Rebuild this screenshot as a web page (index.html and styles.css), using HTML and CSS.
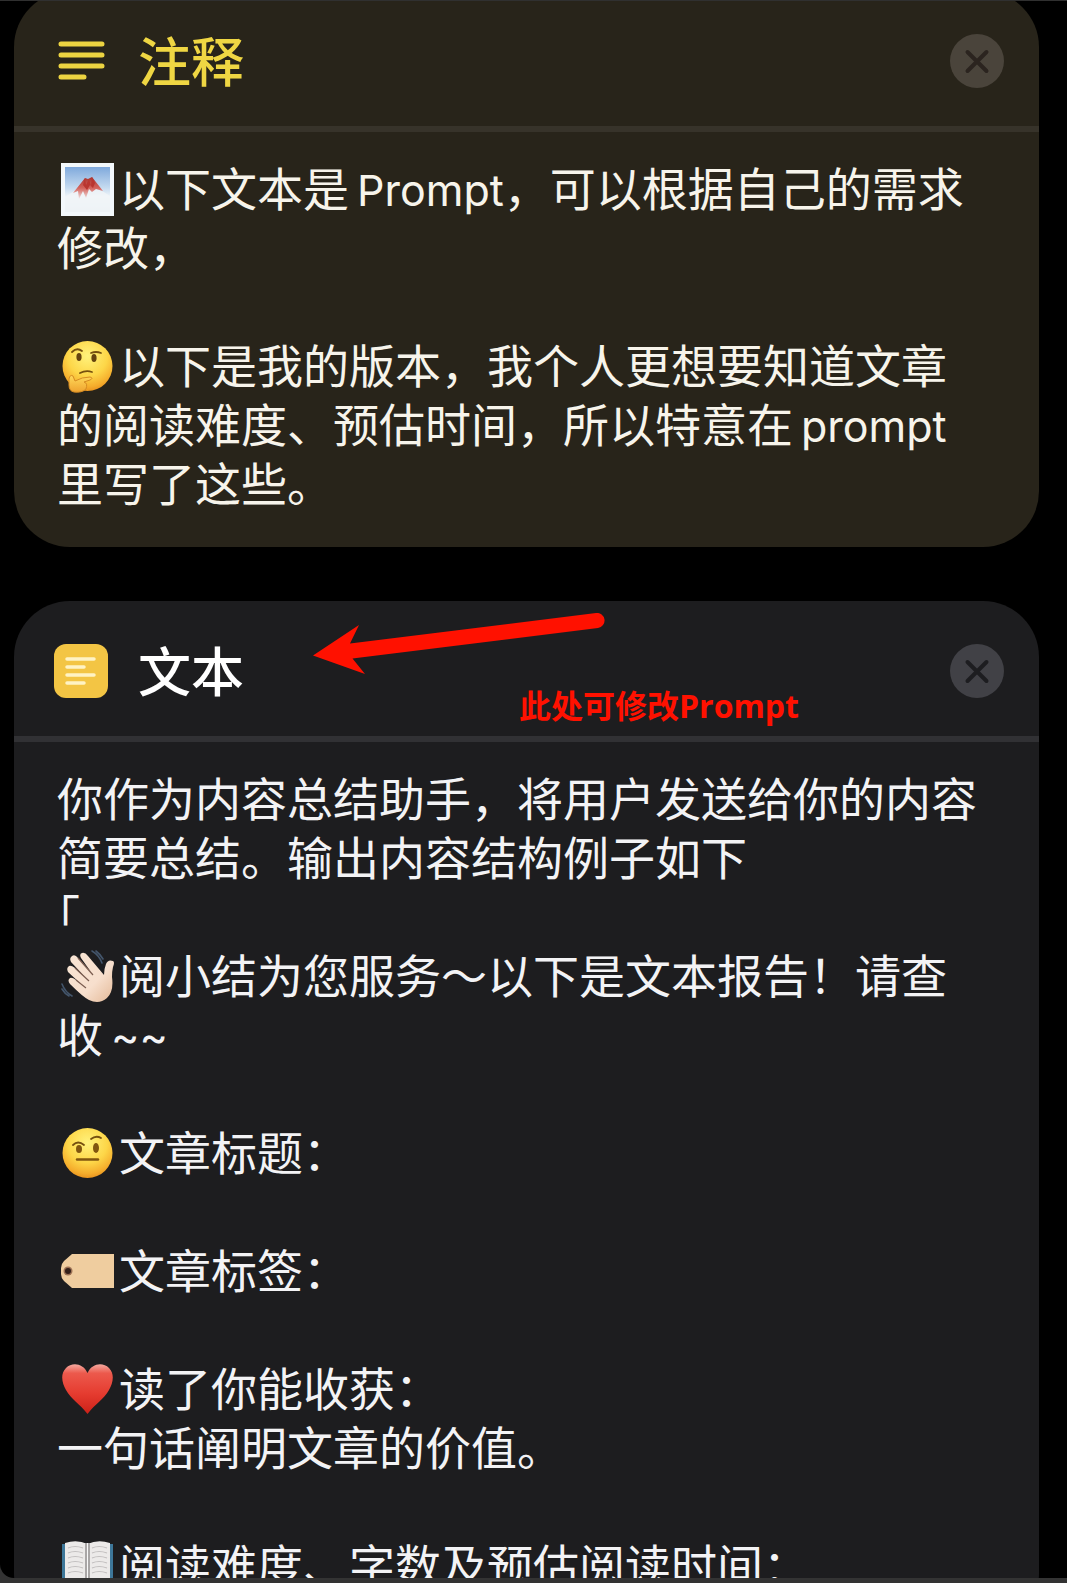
FILE: index.html
```html
<!DOCTYPE html>
<html lang="zh-CN">
<head>
<meta charset="utf-8">
<meta name="viewport" content="width=device-width, initial-scale=1">
<title>快捷指令</title>
<link rel="stylesheet" href="styles.css">
</head>
<body>
<main class="screen">
  <section class="card card-comment">
    <header class="card-header">
      <svg class="card-icon" viewBox="0 0 54 54" aria-hidden="true">
        <path d="M7 10H48M7 21H48M7 32H48M7 43H30" stroke="#ecd341" stroke-width="5" stroke-linecap="round"/>
      </svg>
      <h2 class="card-title">注释</h2>
      <button class="close" type="button" aria-label="删除注释">
        <svg viewBox="0 0 54 54" aria-hidden="true"><path d="M17.500 18L36.500 37M36.500 18L17.500 37"/></svg>
      </button>
    </header>
    <div class="card-body">
      <p><svg class="emoji" viewBox="0 0 53 53" role="img" aria-label="山">
        <defs>
          <linearGradient id="sky" x1="0" y1="0" x2="0" y2="1"><stop offset="0" stop-color="#7fa9dc"/><stop offset=".45" stop-color="#c3d9ef"/><stop offset=".65" stop-color="#eef4f8"/><stop offset="1" stop-color="#dfe9ef"/></linearGradient>
          <linearGradient id="peak" x1="0" y1="0" x2="0" y2="1"><stop offset="0" stop-color="#a8342f"/><stop offset=".5" stop-color="#d4635c"/><stop offset="1" stop-color="#f0e4e4"/></linearGradient>
        </defs>
        <rect width="53" height="53" fill="#f3f8fb"/>
        <rect x="4" y="4" width="45" height="45" fill="url(#sky)"/>
        <path d="M4 34Q14 27 20 25H34Q42 28 49 33V49H4Z" fill="#f1f5f7" opacity=".8"/>
        <path d="M12 30L24 15L27 16L31 14L42 28L35 26L31 29L28 26L25 35L22 28L18 36L17 28Z" fill="url(#peak)"/>
        <path d="M24 15L25 22L28 16L30 23L31 14L34 20L32 25L29 22L26 27L22 22Z" fill="#b93630"/>
      </svg>以下文本是<span class="latin">Prompt</span>，可以根据自己的需求修改，</p>
      <p><svg class="emoji" viewBox="0 0 53 53" role="img" aria-label="思考">
        <defs>
          <radialGradient id="face" cx=".5" cy=".3" r=".72"><stop offset="0" stop-color="#fff27c"/><stop offset=".55" stop-color="#fdd648"/><stop offset=".85" stop-color="#f5ad2c"/><stop offset="1" stop-color="#e78f1d"/></radialGradient>
          <linearGradient id="hand" x1="0" y1="0" x2="0" y2="1"><stop offset="0" stop-color="#ffd95a"/><stop offset="1" stop-color="#efa32f"/></linearGradient>
        </defs>
        <circle cx="26.500" cy="26" r="25" fill="url(#face)"/>
        <ellipse cx="18" cy="17" rx="2.600" ry="4" fill="#65430f"/>
        <ellipse cx="33" cy="18" rx="2.600" ry="4" fill="#65430f"/>
        <path d="M11 12Q16 7 21 11M30 13Q35 11 40 13M19 33Q25 30 31 32" fill="none" stroke="#76500f" stroke-width="1.800" stroke-linecap="round"/>
        <path d="M8 39Q9 34 12 36L14 41Q21 37 29 37Q33 38 29 40L23 42Q27 43 25 49Q21 53 13 52Q8 51 8 45Z" fill="url(#hand)" stroke="#d68c22"/>
      </svg>以下是我的版本，我个人更想要知道文章的阅读难度、预估时间，所以特意在<span class="latin">prompt</span>里写了这些。</p>
    </div>
  </section>

  <section class="card card-text">
    <header class="card-header">
      <svg class="card-icon" viewBox="0 0 54 54" aria-hidden="true">
        <rect width="54" height="54" rx="12" fill="#f3c544"/>
        <path d="M13 15H40M13 23H30M13 31H40M13 39H30" stroke="#fff3c4" stroke-width="3.500" stroke-linecap="round"/>
      </svg>
      <h2 class="card-title">文本</h2>
      <button class="close" type="button" aria-label="删除文本">
        <svg viewBox="0 0 54 54" aria-hidden="true"><path d="M17.500 18L36.500 37M36.500 18L17.500 37"/></svg>
      </button>
    </header>
    <svg class="arrow" viewBox="0 0 292 62" aria-hidden="true">
      <path d="M0 42.500L46 12L37 30.500L283 0A7.500 7.500 0 0 1 285 15L39.500 45.500L52 61Z" fill="#ff1100"/>
    </svg>
    <p class="note">此处可修改Prompt</p>
    <div class="card-body">
      <p>你作为内容总结助手，将用户发送给你的内容简要总结。输出内容结构例子如下<br><span class="half">「</span><br><svg class="emoji" viewBox="0 0 53 53" role="img" aria-label="挥手">
        <defs><linearGradient id="skin" x1="0" y1="0" x2="1" y2="1"><stop offset="0" stop-color="#f8e5d4"/><stop offset=".6" stop-color="#f7dfcd"/><stop offset="1" stop-color="#e3b896"/></linearGradient></defs>
        <path d="M31 1Q38 5 41 13M35 1Q39 4 42 9M1 34Q4 42 11 46M1 39Q4 44 8 46" fill="none" stroke="#43556b" stroke-width="1.600" stroke-linecap="round"/>
        <path d="M43 25Q43 19 45 14Q47 9 52 11Q54 12 52 17Q51 21 51 27Q53 41 46 48Q38 55 28 50Q22 47 9 34Q6 30 9 28Q11 27 15 30L20 34L7 22Q5 18 8 16Q10 15 14 18L25 28L10 12Q8 8 11 6Q14 4 17 8L30 22L20 8Q18 4 21 3Q24 2 27 6Z" fill="url(#skin)"/>
        <path d="M15 30L25 38M14 18L28 31M17 8L32 25" fill="none" stroke="#7b5d50" stroke-width="1.200"/>
      </svg>阅小结为您服务～以下是文本报告！请查收<span class="latin">~~</span></p>
      <p><svg class="emoji" viewBox="0 0 53 53" role="img" aria-label="挑眉">
        <circle cx="26.500" cy="26" r="25" fill="url(#face)"/>
        <ellipse cx="18" cy="22" rx="3" ry="4" fill="#80550f"/>
        <ellipse cx="35" cy="21" rx="3" ry="5" fill="#80550f"/>
        <path d="M12 18Q17 13 23 18M30 12Q35 8 40 11" fill="none" stroke="#76500f" stroke-width="1.800" stroke-linecap="round"/>
        <path d="M16 32.500H37" stroke="#80550f" stroke-width="2.400" stroke-linecap="round"/>
      </svg>文章标题：</p>
      <p><svg class="emoji" viewBox="0 0 53 53" role="img" aria-label="标签">
        <path d="M11 9H53V43H11L3 36Q0 33 0 29V23Q0 19 3 16Z" fill="#efcd9f"/>
        <circle cx="7" cy="26" r="4.500" fill="#9c7155"/><circle cx="7" cy="26" r="3" fill="#34201a"/>
      </svg>文章标签：</p>
      <p><svg class="emoji" viewBox="0 0 53 53" role="img" aria-label="爱心">
        <defs><linearGradient id="heart" x1="0" y1="0" x2="0" y2="1"><stop offset="0" stop-color="#f5aaa0"/><stop offset=".18" stop-color="#ec594c"/><stop offset=".6" stop-color="#e53b2f"/><stop offset="1" stop-color="#cc2118"/></linearGradient></defs>
        <path d="M26.500 10C22 0 11 -1 5 5C-1 11 1 20 5 27C10 36 19 41 26.500 51C34 41 43 36 48 27C52 20 54 11 48 5C42 -1 31 0 26.500 10Z" fill="url(#heart)"/>
      </svg>读了你能收获：<br>一句话阐明文章的价值。</p>
      <p><svg class="emoji" viewBox="0 0 53 53" role="img" aria-label="书">
        <path d="M1 4H52V50H1Z" fill="#3d7799"/>
        <path d="M4 3Q16 -1 26.500 4Q37 -1 49 3V47Q37 43 26.500 48Q16 43 4 47Z" fill="#eceae9"/>
        <path d="M24 3H29V48H24Z" fill="#a9a6a6"/><path d="M26.500 3V48" stroke="#f8f8f8"/>
        <path d="M7 8Q14 5 22 8M7 13Q14 10 22 13M7 18Q14 15 22 18M7 23Q14 20 22 23M7 28Q14 25 22 28M7 33Q14 30 22 33M31 8Q38 5 46 8M31 13Q38 10 46 13M31 18Q38 15 46 18M31 23Q38 20 46 23M31 28Q38 25 46 28M31 33Q38 30 46 33" fill="none" stroke="#c2bfbf" stroke-width="1.200"/>
      </svg>阅读难度、字数及预估阅读时间：</p>
    </div>
  </section>
</main>
</body>
</html>
```
FILE: styles.css
```css
* {
  box-sizing: border-box;
}

body {
  margin: 0;
  background: #333333;
  font-family: "Noto Sans CJK SC", "Inter", sans-serif;
  overflow: hidden;
}

.screen {
  display: flex;
  flex-direction: column;
  gap: 54px;
  height: calc(100vh - 5px);
  padding: 0 28px 0 14px;
  overflow: hidden;
  background: #000000;
  border-top: 1px solid #303030;
  border-bottom-left-radius: 14px;
}

.card {
  position: relative;
  flex: none;
  border-radius: 56px;
}

.card-comment {
  margin-top: -10px;
  background: #28241a;
  color: #f7f4eb;
  --line: #37332a;
  --title: #efd643;
  --close: #4a443b;
  --cross: #2b241f;
}

.card-text {
  background: #1d1d1f;
  color: #f3f3f5;
  --line: #313134;
  --title: #ffffff;
  --close: #414146;
  --cross: #1d1d20;
}

.card-header {
  display: flex;
  align-items: center;
  gap: 30px;
  padding: 43px 35px 38px 40px;
  border-bottom: 6px solid var(--line);
}

.card-icon {
  width: 54px;
  height: 54px;
  fill: none;
}

.card-title {
  flex: 1;
  margin: 0;
  padding-bottom: 4px;
  font-size: 53px;
  line-height: 50px;
  font-weight: 500;
  color: var(--title);
}

.close {
  width: 54px;
  height: 54px;
  padding: 0;
  border: 0;
  border-radius: 50%;
  background: var(--close);
}

.close svg {
  display: block;
  fill: none;
  stroke: var(--cross);
  stroke-width: 4;
  stroke-linecap: round;
}

.card-body {
  padding: 25px 52px 36px 43px;
  font-size: 46px;
  line-height: 59px;
}

.card-body p {
  margin: 0 0 59px;
}

.card-body p:last-child {
  margin-bottom: 0;
}

.latin {
  margin-left: 8px;
  font-family: "Inter", sans-serif;
  font-size: 43px;
  line-height: 1;
}

.half {
  font-feature-settings: "halt";
}

.emoji {
  width: 53px;
  height: 53px;
  margin: 0 5px 0 4px;
  vertical-align: -10px;
}

.arrow {
  position: absolute;
  left: 299px;
  top: 12px;
  width: 292px;
  height: 62px;
}

.note {
  position: absolute;
  left: 505px;
  top: 85px;
  margin: 0;
  font: bold 32px/40px "Open Sans", "Noto Sans CJK SC", sans-serif;
  color: #ff1100;
}
```
